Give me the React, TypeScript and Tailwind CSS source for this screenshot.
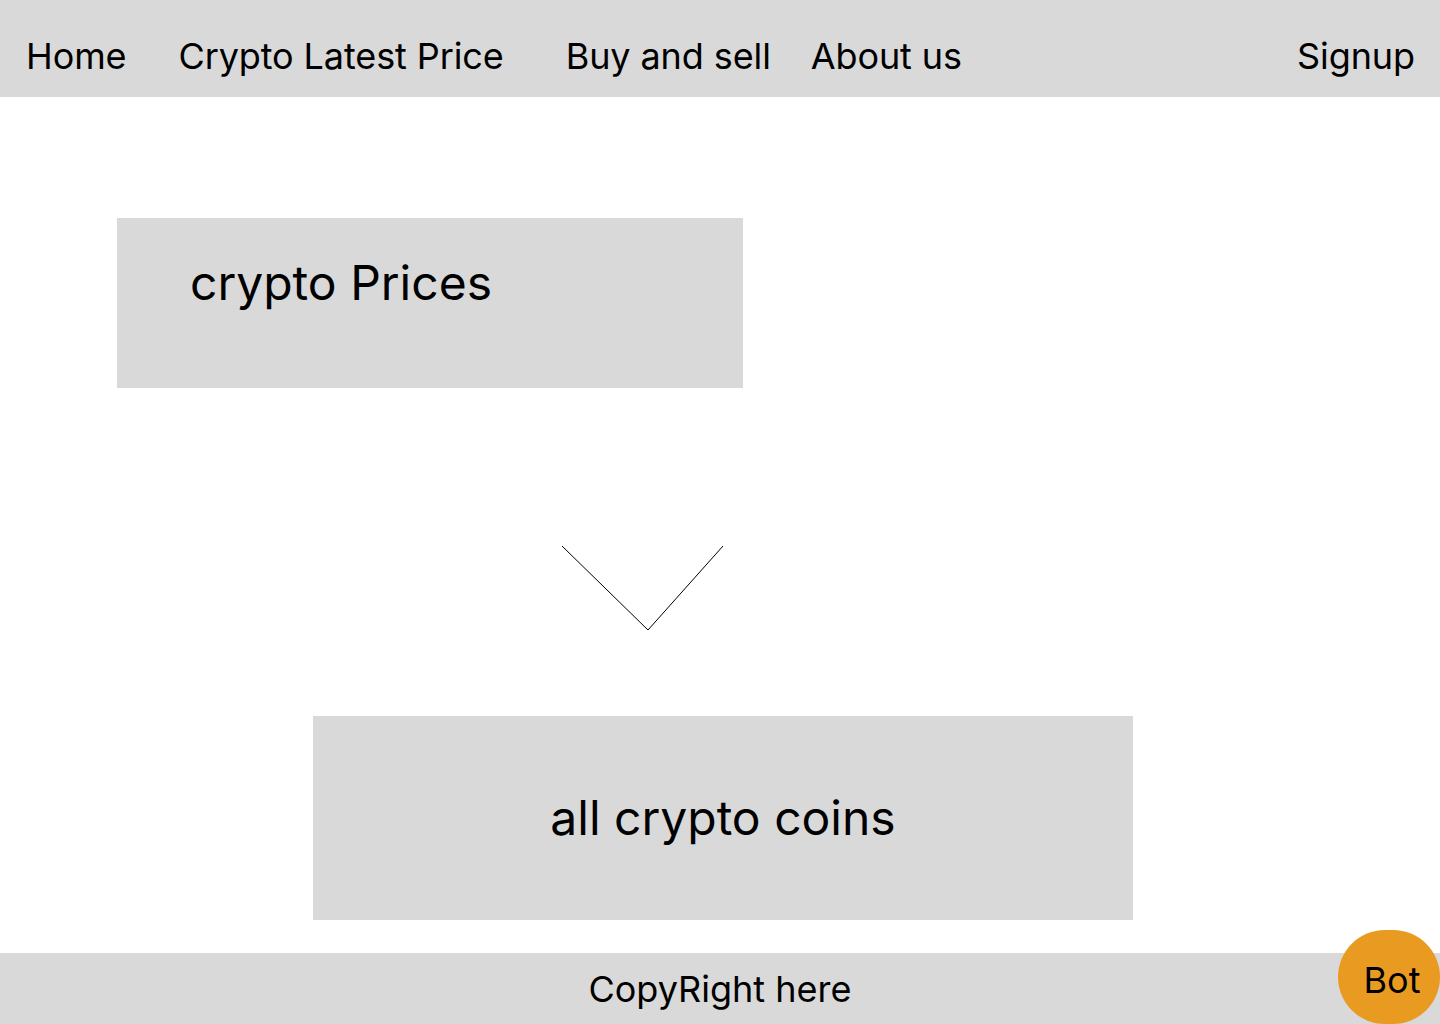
export default function App() {
  return (
    <div className="relative flex h-[1024px] w-[1440px] flex-col overflow-hidden bg-white font-['Inter',sans-serif] text-black">
      {/* Header */}
      <header className="flex h-[97px] shrink-0 items-start bg-[#d9d9d9] pl-[26px] pr-[25px] pt-[38px] text-[36px] leading-none tracking-[-0.1px]">
        <a className="mr-[52px]">Home</a>
        <a className="mr-[62px]">Crypto Latest Price</a>
        <a className="mr-[40px]">Buy and sell</a>
        <a>About us</a>
        <a className="ml-auto">Signup</a>
      </header>

      {/* Main */}
      <main className="flex flex-1 flex-col">
        <div className="ml-[117px] mt-[121px] h-[170px] w-[626px] bg-[#d9d9d9] pl-[73px] pt-[41px] text-[48px] leading-none">
          crypto Prices
        </div>

        <div className="ml-[561px] mt-[157px]">
          <svg width="164" height="86" viewBox="0 0 164 86" fill="none">
            <path d="M1 1 L87 85 L162 1" stroke="#000" strokeWidth="1" />
          </svg>
        </div>

        <div className="ml-[313px] mt-[85px] flex h-[204px] w-[820px] items-center justify-center bg-[#d9d9d9] text-[48px] leading-none">
          all crypto coins
        </div>
      </main>

      {/* Footer */}
      <footer className="flex h-[71px] shrink-0 items-center justify-center bg-[#d9d9d9] text-[36px] leading-none">
        CopyRight here
      </footer>

      <button className="absolute left-[1338px] top-[930px] flex h-[94px] w-[102px] items-center justify-center rounded-full bg-[#e99a21] pl-[6px] pt-[6px] text-[36px] leading-none">
        Bot
      </button>
    </div>
  );
}
